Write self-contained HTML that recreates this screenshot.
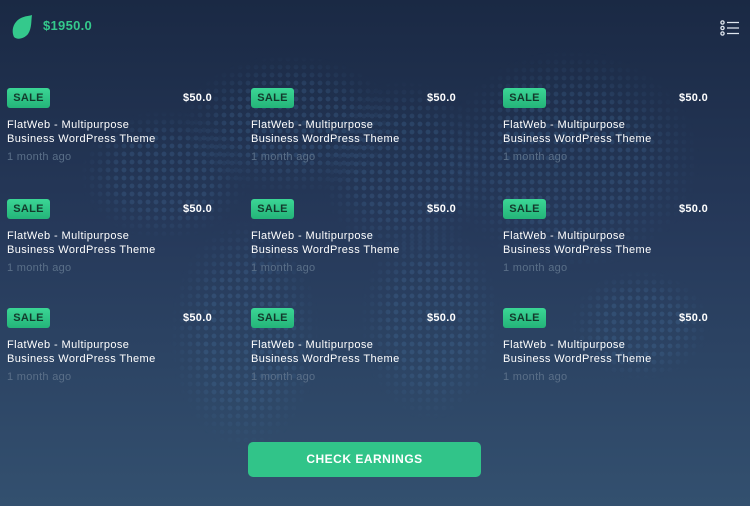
<!DOCTYPE html>
<html><head><style>
*{margin:0;padding:0;box-sizing:border-box}
body{width:750px;height:506px;overflow:hidden;font-family:"Liberation Sans",sans-serif;background:linear-gradient(180deg,#1a2944 0%,#26395a 45%,#33506f 100%);position:relative;color:#fff}
.dots{position:absolute;background-image:radial-gradient(circle,rgba(80,130,180,.22) 2.2px,transparent 2.6px);background-size:8px 8px;-webkit-mask-image:radial-gradient(ellipse closest-side,#000 55%,transparent 100%);mask-image:radial-gradient(ellipse closest-side,#000 55%,transparent 100%)}
.logo{position:absolute;left:11px;top:15px}
.bal{position:absolute;left:43px;top:18px;color:#34c98c;font-weight:bold;font-size:13px;letter-spacing:.3px}
.menu{position:absolute;left:720px;top:20px}
.card{position:absolute;width:205px}
.sale{position:absolute;left:0;top:0;width:43px;height:20px;background:linear-gradient(#3bd695,#24b479);border-radius:3px;color:#133a2c;font-weight:bold;font-size:11px;text-align:center;line-height:20px;letter-spacing:.3px}
.price{position:absolute;right:0;top:4px;font-weight:bold;font-size:11px;letter-spacing:.3px}
.title{position:absolute;left:0;top:30px;font-size:11px;line-height:14px;width:210px;letter-spacing:.4px}
.time{position:absolute;left:0;top:63px;font-size:11px;color:#5a6f88;letter-spacing:.3px}
.btn{position:absolute;left:248px;top:442px;width:233px;height:35px;background:#31c489;border-radius:5px;text-align:center;line-height:35px;font-weight:bold;font-size:12px;letter-spacing:.5px}
</style></head><body>
<div class="dots" style="left:180px;top:55px;width:220px;height:140px"></div>
<div class="dots" style="left:80px;top:110px;width:170px;height:130px"></div>
<div class="dots" style="left:170px;top:220px;width:150px;height:230px"></div>
<div class="dots" style="left:320px;top:80px;width:170px;height:180px"></div>
<div class="dots" style="left:360px;top:220px;width:140px;height:200px"></div>
<div class="dots" style="left:440px;top:50px;width:260px;height:220px"></div>
<div class="dots" style="left:570px;top:270px;width:140px;height:110px"></div>
<svg class="logo" width="22" height="24" viewBox="0 0 22 24"><path d="M3 22C0 16 2 7 10 3 14 1 18 1 21 0 20 6 21 13 17 19 13 24 6 25 3 22Z" fill="#34c98c"/></svg>
<div class="bal">$1950.0</div>
<svg class="menu" width="20" height="16" viewBox="0 0 20 16"><g stroke="#dfe6ee" fill="none" stroke-width="1.3"><circle cx="2.5" cy="2.5" r="1.6"/><circle cx="2.5" cy="8" r="1.6"/><circle cx="2.5" cy="13.5" r="1.6"/><path d="M7 2.5H19M7 8H19M7 13.5H19"/></g></svg>

<div class="card" style="left:7px;top:88px"><div class="sale">SALE</div><div class="price">$50.0</div><div class="title">FlatWeb - Multipurpose<br>Business WordPress Theme</div><div class="time">1 month ago</div></div>
<div class="card" style="left:251px;top:88px"><div class="sale">SALE</div><div class="price">$50.0</div><div class="title">FlatWeb - Multipurpose<br>Business WordPress Theme</div><div class="time">1 month ago</div></div>
<div class="card" style="left:503px;top:88px"><div class="sale">SALE</div><div class="price">$50.0</div><div class="title">FlatWeb - Multipurpose<br>Business WordPress Theme</div><div class="time">1 month ago</div></div>
<div class="card" style="left:7px;top:199px"><div class="sale">SALE</div><div class="price">$50.0</div><div class="title">FlatWeb - Multipurpose<br>Business WordPress Theme</div><div class="time">1 month ago</div></div>
<div class="card" style="left:251px;top:199px"><div class="sale">SALE</div><div class="price">$50.0</div><div class="title">FlatWeb - Multipurpose<br>Business WordPress Theme</div><div class="time">1 month ago</div></div>
<div class="card" style="left:503px;top:199px"><div class="sale">SALE</div><div class="price">$50.0</div><div class="title">FlatWeb - Multipurpose<br>Business WordPress Theme</div><div class="time">1 month ago</div></div>
<div class="card" style="left:7px;top:308px"><div class="sale">SALE</div><div class="price">$50.0</div><div class="title">FlatWeb - Multipurpose<br>Business WordPress Theme</div><div class="time">1 month ago</div></div>
<div class="card" style="left:251px;top:308px"><div class="sale">SALE</div><div class="price">$50.0</div><div class="title">FlatWeb - Multipurpose<br>Business WordPress Theme</div><div class="time">1 month ago</div></div>
<div class="card" style="left:503px;top:308px"><div class="sale">SALE</div><div class="price">$50.0</div><div class="title">FlatWeb - Multipurpose<br>Business WordPress Theme</div><div class="time">1 month ago</div></div>

<div class="btn">CHECK EARNINGS</div>
</body></html>
